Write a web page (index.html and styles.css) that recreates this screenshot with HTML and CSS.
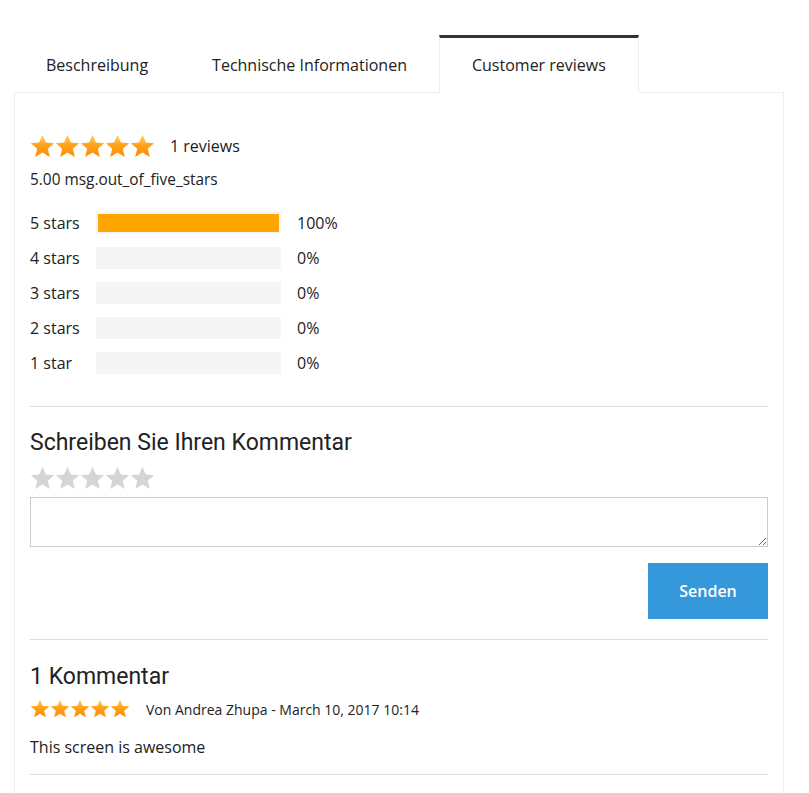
FILE: index.html
```html
<!DOCTYPE html>
<html>
<head>
<meta charset="utf-8">
<link rel="stylesheet" href="styles.css">
</head>
<body>
<svg class="defs" width="0" height="0" aria-hidden="true">
  <defs>
    <linearGradient id="gold" x1="0" y1="0" x2="0" y2="1">
      <stop offset="0" stop-color="#ffd266"/>
      <stop offset="0.45" stop-color="#ffa31c"/>
      <stop offset="1" stop-color="#ff8a00"/>
    </linearGradient>
    <polygon id="star" points="12,0.8 15.2,8.1 23.2,8.8 17.1,14.1 19,22 12,17.8 5,22 6.9,14.1 0.8,8.8 8.8,8.1"/>
  </defs>
</svg>
<div class="page">
  <div class="tabs">
    <div class="tab">Beschreibung</div>
    <div class="tab">Technische Informationen</div>
    <div class="tab active">Customer reviews</div>
  </div>
  <div class="panel">
    <div class="summary">
      <div class="stars big">
        <svg viewBox="0 0 24 24"><use href="#star" fill="url(#gold)"/></svg>
        <svg viewBox="0 0 24 24"><use href="#star" fill="url(#gold)"/></svg>
        <svg viewBox="0 0 24 24"><use href="#star" fill="url(#gold)"/></svg>
        <svg viewBox="0 0 24 24"><use href="#star" fill="url(#gold)"/></svg>
        <svg viewBox="0 0 24 24"><use href="#star" fill="url(#gold)"/></svg>
      </div>
      <span class="count">1 reviews</span>
    </div>
    <div class="avg">5.00 msg.out_of_five_stars</div>
    <div class="bars">
      <div class="bar-row"><span class="label">5 stars</span><div class="bar"><div class="fill" style="width:100%"></div></div><span class="pct">100%</span></div>
      <div class="bar-row"><span class="label">4 stars</span><div class="bar"></div><span class="pct">0%</span></div>
      <div class="bar-row"><span class="label">3 stars</span><div class="bar"></div><span class="pct">0%</span></div>
      <div class="bar-row"><span class="label">2 stars</span><div class="bar"></div><span class="pct">0%</span></div>
      <div class="bar-row"><span class="label">1 star</span><div class="bar"></div><span class="pct">0%</span></div>
    </div>
    <hr class="sep sep-1">
    <h3 class="heading write-heading">Schreiben Sie Ihren Kommentar</h3>
    <div class="stars big gray">
      <svg viewBox="0 0 24 24"><use href="#star"/></svg>
      <svg viewBox="0 0 24 24"><use href="#star"/></svg>
      <svg viewBox="0 0 24 24"><use href="#star"/></svg>
      <svg viewBox="0 0 24 24"><use href="#star"/></svg>
      <svg viewBox="0 0 24 24"><use href="#star"/></svg>
    </div>
    <textarea class="comment-box"></textarea>
    <div class="actions"><button class="send">Senden</button></div>
    <hr class="sep sep-2">
    <h3 class="heading list-heading">1 Kommentar</h3>
    <div class="comment-meta">
      <div class="stars small">
        <svg viewBox="0 0 24 24"><use href="#star" fill="url(#gold)"/></svg>
        <svg viewBox="0 0 24 24"><use href="#star" fill="url(#gold)"/></svg>
        <svg viewBox="0 0 24 24"><use href="#star" fill="url(#gold)"/></svg>
        <svg viewBox="0 0 24 24"><use href="#star" fill="url(#gold)"/></svg>
        <svg viewBox="0 0 24 24"><use href="#star" fill="url(#gold)"/></svg>
      </div>
      <span class="author">Von Andrea Zhupa - March 10, 2017 10:14</span>
    </div>
    <p class="comment-text">This screen is awesome</p>
    <hr class="sep sep-3">
  </div>
</div>
</body>
</html>
```
FILE: styles.css
```css
* { box-sizing: border-box; }
html, body { margin: 0; padding: 0; background: #fff; }
body {
  font-family: "Open Sans", "Liberation Sans", sans-serif;
  color: #222;
  font-size: 16px;
}
.defs { position: absolute; width: 0; height: 0; overflow: hidden; }
.page { padding: 35px 25px 0 14px; }
.tabs { display: flex; }
.tab {
  height: 58px;
  padding: 0 32px 2px;
  border-top: 3px solid transparent;
  display: flex;
  align-items: center;
  font-size: 16px;
  color: #222;
  margin-bottom: -1px;
  position: relative;
}
.tab.active {
  border: 1px solid #eee;
  border-top: 3px solid #333;
  border-bottom-color: #fff;
  background: #fff;
  z-index: 1;
  padding: 0 32px;
}
.panel {
  border: 1px solid #eee;
  padding: 15px 15px 20px;
}
.stars { display: flex; }
.stars svg { display: block; }
.stars.big svg { width: 25px; height: 25px; }
.stars.small svg { width: 20px; height: 20px; }
.stars.gray svg { fill: #d5d5d5; }
.summary {
  display: flex;
  align-items: center;
  margin-top: 25px;
  height: 26px;
}
.count { margin-left: 15px; font-size: 16px; }
.avg { margin-top: 11px; line-height: 20px; font-size: 15.4px; }
.bars { margin-top: 22px; display: flex; flex-direction: column; gap: 13px; }
.bar-row { display: flex; align-items: center; height: 22px; }
.label { width: 66px; }
.bar { width: 185px; height: 22px; background: #f5f5f5; padding: 2px; }
.fill { height: 100%; background: #ffa500; }
.pct { margin-left: 16px; }
.sep { border: 0; border-top: 1px solid #ddd; margin: 0; }
.sep-1 { margin-top: 32px; }
.heading {
  font-family: Roboto, "Liberation Sans", sans-serif;
  font-weight: 400;
  font-size: 23px;
  line-height: 28px;
  margin: 0;
  color: #222;
}
.write-heading { margin-top: 22px; }
.stars.gray { margin-top: 9px; }
.comment-box {
  display: block;
  width: 100%;
  height: 50px;
  margin-top: 6px;
  border: 1px solid #ccc;
  font: inherit;
}
.actions { display: flex; justify-content: flex-end; margin-top: 16px; }
.send {
  width: 120px;
  height: 56px;
  border: 0;
  background: #3498db;
  color: #fff;
  font-family: "Open Sans", "Liberation Sans", sans-serif;
  font-size: 16px;
  font-weight: 600;
}
.sep-2 { margin-top: 20px; }
.list-heading { margin-top: 23px; }
.comment-meta { display: flex; align-items: center; margin-top: 8px; }
.author { margin-left: 16px; font-size: 14px; }
.comment-text { margin: 18px 0 0; line-height: 20px; font-size: 16px; }
.sep-3 { margin-top: 17px; }
```
